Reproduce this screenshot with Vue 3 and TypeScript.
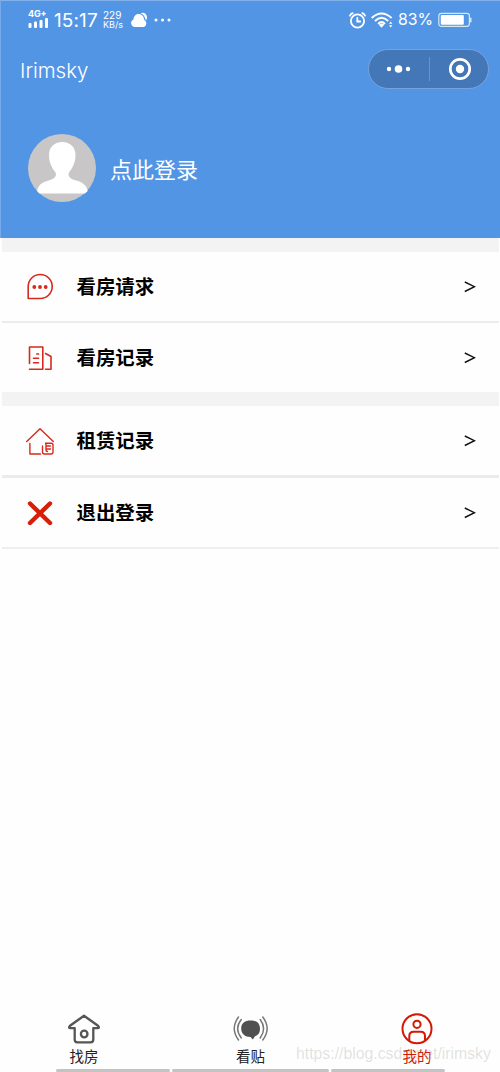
<script setup lang="ts">
interface MenuItem {
  label: string
  icon: 'chat' | 'records' | 'lease' | 'exit'
}

const groups: { name: string; items: MenuItem[] }[] = [
  {
    name: 'viewings',
    items: [
      { label: '看房请求', icon: 'chat' },
      { label: '看房记录', icon: 'records' },
    ],
  },
  {
    name: 'account',
    items: [
      { label: '租赁记录', icon: 'lease' },
      { label: '退出登录', icon: 'exit' },
    ],
  },
]
</script>

<template>
  <div class="page">
    <header class="hero">
      <div class="status">
        <div class="signal">
          <span class="net">4G<b>+</b></span>
          <svg width="21" height="10" viewBox="0 0 21 10" fill="#fff">
            <rect x="0.5" y="5" width="3" height="5" rx="1" />
            <rect x="6" y="3.500" width="3" height="6.500" rx="1" />
            <rect x="11.500" y="2" width="3" height="8" rx="1" />
            <rect x="17" y="0" width="3" height="10" rx="1" />
          </svg>
        </div>
        <span class="clock">15:17</span>
        <span class="speed"><span>229</span><span>KB/s</span></span>
        <svg class="cloud" width="17" height="16" viewBox="0 0 17 16" fill="#fff">
          <path d="M9.500 1.200C12.500-.4 16 1.600 16 5.200c0 1.600-.5 2.600-1.200 3.400C14.300 5 12.500 2.300 9.500 1.200Z" />
          <path d="M4 15a3.900 3.900 0 0 1-1.500-7.500C2.700 3.800 5 1.900 7.700 1.900C10.800 1.900 13 4.200 13.200 8A3.800 3.800 0 0 1 12.700 15Z" />
        </svg>
        <svg class="more" width="17" height="4" viewBox="0 0 17 4" fill="#fff">
          <circle cx="2" cy="2" r="1.500" /><circle cx="8.500" cy="2" r="1.500" /><circle cx="15" cy="2" r="1.500" />
        </svg>
        <svg class="alarm" width="17" height="17" viewBox="0 0 17 17" fill="none" stroke="#fff" stroke-width="1.800" stroke-linecap="round">
          <circle cx="8.500" cy="9" r="6.600" />
          <path d="M8.300 5.800v3.700h3M1 3.600Q1.800 1.800 3.700 1.200M16 3.600Q15.200 1.800 13.300 1.200" />
        </svg>
        <svg class="wifi" width="22" height="17" viewBox="0 0 22 17" fill="none" stroke="#fff" stroke-width="1.900">
          <path d="M.7 6Q10.500-3 20.600 6M4 9Q10.500 2.600 17.200 9M7.100 11.800Q10.500 8.200 14 11.800" />
          <path d="M7.800 12.800Q10.500 10.200 13.300 12.800L10.500 15.700Z" fill="#fff" stroke="none" />
          <path d="M19.700 9.500l1.700 2.300H18zM19.700 15.500l1.700-2.300H18z" fill="#fff" stroke="none" />
        </svg>
        <span class="percent">83%</span>
        <svg class="battery" width="34" height="16" viewBox="0 0 34 16">
          <rect x=".8" y="1.300" width="30.600" height="13" rx="2.500" fill="none" stroke="#d5e8ee" stroke-width="1.200" />
          <rect x="2.800" y="3" width="23" height="9.800" rx="1" fill="#fff" />
          <rect x="32" y="5.500" width="1.500" height="5" rx=".7" fill="#d5e8ee" />
        </svg>
      </div>

      <div class="titlebar">
        <span class="title">Irimsky</span>
        <div class="capsule">
          <svg width="60" height="38" viewBox="0 0 60 38" fill="#fff">
            <circle cx="20" cy="19" r="2.200" /><circle cx="29.500" cy="19" r="3.800" /><circle cx="39" cy="19" r="2.200" />
          </svg>
          <i class="divider"></i>
          <svg width="58" height="38" viewBox="0 0 58 38">
            <circle cx="30" cy="19" r="9.700" fill="none" stroke="#fff" stroke-width="2.700" />
            <circle cx="30" cy="19" r="4.200" fill="#fff" />
          </svg>
        </div>
      </div>

      <div class="profile">
        <svg class="avatar" width="68" height="68" viewBox="0 0 68 68">
          <circle cx="34" cy="34" r="34" fill="#c8c6c7" />
          <path d="M34.300 8C26 8 21 13.500 21 21C21 29 24 34 27.500 38.500C29 42 26.500 44.500 22 46C14 48.500 11 50 9 57L11.500 59.500H57L59.700 57C58 50 54 48 46.500 46C42 44.500 39.500 42 41 38.500C44.500 34 47.500 29 47.500 21C47.500 13.500 42.500 8 34.300 8Z" fill="#fff" />
        </svg>
        <span class="login">点此登录</span>
      </div>
    </header>

    <main>
      <section v-for="group in groups" :key="group.name" class="group" :class="group.name">
        <div v-for="item in group.items" :key="item.label" class="row">
          <svg class="icon" width="30" height="30" viewBox="0 0 30 30" fill="none" stroke="#d52b1c" stroke-width="1.600" stroke-linecap="round" stroke-linejoin="round">
            <template v-if="item.icon === 'chat'">
              <path d="M3.200 26.500V14.500A12 12 0 1 1 15.200 26.500Z" />
              <g fill="#d52b1c" stroke="none"><circle cx="9.300" cy="15" r="1.900" /><circle cx="15" cy="15" r="1.900" /><circle cx="20.700" cy="15" r="1.900" /></g>
            </template>
            <template v-else-if="item.icon === 'records'">
              <path d="M4.500 20.500V4H17.800V26.200H4.500M8.500 15.300h5M11.800 11h1.700M8.500 19.700h5M20.500 10.500L26 13.500V26.200H20.500" />
            </template>
            <template v-else-if="item.icon === 'lease'">
              <path d="M1.700 15.500L15 2.800L28.300 15.500M4.900 17.500V28H15.500M17.500 20v6q0 2 2 2h6.500q2 0 2-2v-7q0-1.800-1.800-1.800h-5.500M20.500 17.200q.8.800.5 2.300v4.500q0 1.500 1.500 1.500M21.500 20h4M21.500 23h4" stroke-width="1.400" />
            </template>
            <path v-else d="M5 5.500L25 25M25 5.500L5 25" stroke="#d81e06" stroke-width="4.400" />
          </svg>
          <span class="label">{{ item.label }}</span>
          <svg class="arrow" width="12" height="12" viewBox="0 0 12 12" fill="none" stroke="#111" stroke-width="1.400">
            <path d="M.8 1L10.500 5.700L.8 10.500" />
          </svg>
        </div>
      </section>
    </main>

    <nav class="tabs">
      <div class="tab">
        <svg width="36" height="34" viewBox="0 0 36 34" fill="none" stroke="#555" stroke-width="2.300" stroke-linejoin="round">
          <path d="M18 3.700L4 13.700Q2 16 4.500 16.200H8.700V27.500Q8.700 30.300 11.500 30.300H24.500Q27.300 30.300 27.300 27.500V16.200H31.500Q34 16 32 13.700Z" />
          <circle cx="18.200" cy="22" r="3.300" />
        </svg>
        <span>找房</span>
      </div>
      <div class="tab">
        <svg width="36" height="34" viewBox="0 0 36 34" fill="none" stroke="#777" stroke-width="1.500" stroke-linecap="round">
          <path d="M17.500 8.500C24 8.500 27 11.500 27 17C27 21 25 23.500 22 24.200L19.800 27.500L17.500 25C12 25 8.200 22 8.200 16.500C8.200 11 12 8.500 17.500 8.500Z" fill="#505050" stroke="none" />
          <path d="M5.500 5Q-3 16.500 5.500 28M8.300 7.500Q1 16.500 8.300 26M29.800 5Q38.500 16.500 29.800 28M27.200 7.500Q34 16.500 27.200 26" />
        </svg>
        <span>看贴</span>
      </div>
      <div class="tab active">
        <svg width="36" height="34" viewBox="0 0 36 34" fill="none" stroke="#d31805" stroke-width="2">
          <circle cx="18" cy="16.800" r="14.500" />
          <circle cx="18" cy="12.300" r="3.600" />
          <path d="M10.300 28.800V24.300Q10.300 19.800 14.500 19.800H21.800Q26 19.800 26 24.300V28.800" />
        </svg>
        <span>我的</span>
      </div>
      <div class="strip"><i></i><i></i><i></i></div>
      <span class="watermark">https://blog.csdn.net/irimsky</span>
    </nav>
  </div>
</template>

<style>
body { margin: 0; background: #fefefe; }
</style>

<style scoped>
.page {
  width: 500px;
  height: 1072px;
  overflow: hidden;
  display: flex;
  flex-direction: column;
  background: #fefefe;
  font-family: Roboto, "Noto Sans CJK SC", sans-serif;
}
svg { display: block; flex: none; }
.hero {
  box-sizing: border-box;
  height: 238px;
  flex: none;
  background: #5395e5;
  border-top: 1px solid #81b0ea;
  border-left: 1px solid #75a9e9;
  color: #fff;
}
.status { display: flex; align-items: center; height: 38px; padding-left: 27px; }
.signal { width: 21px; display: flex; flex-direction: column; gap: 0; margin-top: -2px; }
.net { height: 8px; font: 700 9px/8px Inter, sans-serif; white-space: nowrap; }
.net b { font-size: 8px; position: relative; top: -1px; }
.clock { width: 45px; margin-left: 5px; font: 400 19px/38px Inter, sans-serif; letter-spacing: 0.1px; padding-top: 2px; white-space: nowrap; }
.speed { display: flex; flex-direction: column; width: 21px; margin-left: 4px; font: 400 9px/9px Inter, sans-serif; }
.speed span:first-child { font-size: 10px; }
.cloud { margin-left: 7px; }
.more { margin-left: 6px; }
.alarm { margin-left: 178px; }
.wifi { margin-left: 5px; }
.percent { width: 34px; margin-left: 5px; font: 400 15.800px/38px Inter, sans-serif; white-space: nowrap; }
.battery { margin-left: 6px; }
.titlebar { display: flex; justify-content: space-between; align-items: center; height: 60px; padding: 0 11px 0 19px; }
.title { font: 300 20.500px/30px Inter, sans-serif; padding-top: 3px; }
.capsule {
  box-sizing: border-box;
  width: 121px;
  height: 40px;
  display: flex;
  align-items: center;
  border: 1px solid #76a3dc;
  border-radius: 20px;
  background: #4377b7;
}
.divider { width: 1px; height: 24px; background: #6793ca; }
.profile { display: flex; align-items: center; gap: 14px; margin-top: 35px; padding-left: 27px; }
.login { font: 400 22px/34px "Noto Sans CJK SC", sans-serif; }
main { flex: none; margin: 0 1px 0 2px; }
.group { border-top: 14px solid #f3f3f3; }
.row {
  box-sizing: border-box;
  height: 70px;
  display: flex;
  align-items: center;
  padding: 0 23px;
}
.viewings .row:first-child { border-bottom: 2px solid #ececec; height: 71px; }
.viewings .row:last-child { height: 69px; }
.account .row:first-child { border-bottom: 3px solid #ebebeb; height: 72px; }
.account .row:last-child { border-bottom: 2px solid #eee; height: 71px; }
.label { margin: -2px 0 0 21.500px; font: 700 19.400px/28px "Noto Sans CJK SC", sans-serif; color: #000; }
.arrow { margin-left: auto; }
.tabs { position: relative; margin-top: auto; height: 62px; display: flex; justify-content: space-between; padding: 0 55px 0 56px; }
.tab { width: 56px; display: flex; flex-direction: column; align-items: center; font: 400 14.500px/20px "Noto Sans CJK SC", sans-serif; color: #222; }
.tab svg { margin: 2px 0 0; }
.active { color: #d31805; }
.strip { position: absolute; left: 56px; bottom: 0; display: grid; grid-template-columns: 114px 157px 114px; gap: 2px; width: 389px; }
.strip i { height: 3px; border-radius: 2px; background: #c3c3c3; }
.watermark { position: absolute; left: 296px; top: 34px; font: 400 15.800px/20px "Liberation Sans", Arial, sans-serif; color: rgba(120, 120, 120, 0.22); white-space: nowrap; }
</style>
